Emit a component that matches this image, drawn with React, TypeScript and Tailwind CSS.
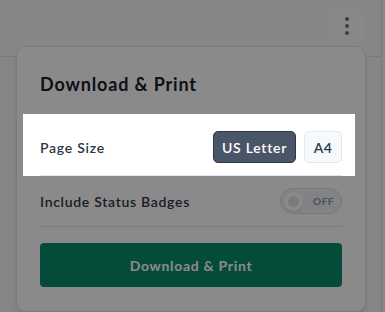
import React from "react";

export default function App() {
  const font = { fontFamily: "Lato, 'Noto Sans', sans-serif" };
  return (
    <div className="relative w-[385px] h-[312px] overflow-hidden bg-[#f7f7f7]" style={font}>
      {/* underlying page */}
      <div className="w-[382px] h-full border-r border-[#e0e0e0] bg-[#f7f7f7]">
        <div className="h-[57px] border-b border-[#e2e2e2] flex items-start justify-end pt-[10px] pr-[16px]">
          <div className="w-[38px] h-[32px] rounded-md bg-[#fbfbfb] flex flex-col items-center justify-center gap-[3px] pl-[1px]">
            <span className="block w-[4px] h-[4px] rounded-full bg-[#6b7280]" />
            <span className="block w-[4px] h-[4px] rounded-full bg-[#6b7280]" />
            <span className="block w-[4px] h-[4px] rounded-full bg-[#6b7280]" />
          </div>
        </div>
        <div className="pt-[155px] -ml-[13px] text-[26px] leading-[30px] text-[#4a5568] font-light">S</div>
      </div>

      {/* popover card */}
      <div className="absolute left-[16px] top-[46px] w-[350px] h-[266px] rounded-[10px] bg-white border border-[#e6e6e6] shadow-md px-[23px] pt-[23px]">
        <div className="text-[18px] leading-[28px] font-bold text-[#1a202c] mb-[16px] tracking-[0.85px]">Download &amp; Print</div>

        {/* highlighted row */}
        <div className="relative z-20 -ml-[17px] pl-[17px] -mr-[13px] pr-[13px] pt-[5px] bg-white">
          <div className="flex items-center justify-between py-[12px] border-b border-[#e2e8f0]">
            <span className="text-[14px] font-semibold text-[#2d3748] tracking-[0.75px]">Page Size</span>
            <div className="flex items-center gap-[8px]">
              <button className="h-[32px] w-[83px] rounded-[5px] bg-[#4a5568] border border-[#2d3748] text-white text-[14px] font-semibold tracking-[0.75px]">
                US Letter
              </button>
              <button className="h-[32px] w-[38px] rounded-[5px] bg-[#f7fafc] border border-[#e2e8f0] text-[#2d3748] text-[14px] font-semibold tracking-[0.5px]">
                A4
              </button>
            </div>
          </div>
        </div>

        <div className="flex items-center justify-between py-[12px] border-b border-[#e2e8f0]">
          <span className="text-[14px] font-semibold text-[#2d3748] tracking-[0.7px]">Include Status Badges</span>
          <div className="w-[62px] h-[26px] rounded-full bg-[#f1f3f5] border border-[#d9dde2] flex items-center pl-[3px] pr-[7px] justify-between">
            <span className="block w-[19px] h-[19px] rounded-full bg-[#dfe3e8] border-[4px] border-white shadow-sm" />
            <span className="text-[10px] font-bold text-[#8a94a3] tracking-[0.5px]">OFF</span>
          </div>
        </div>

        <button className="mt-[16px] w-full h-[44px] rounded-[4px] bg-[#098b6b] text-white text-[14px] font-bold tracking-[0.7px]">
          Download &amp; Print
        </button>
      </div>

      {/* dim overlay */}
      <div className="absolute inset-0 z-10 bg-black/[0.46]" />
    </div>
  );
}
